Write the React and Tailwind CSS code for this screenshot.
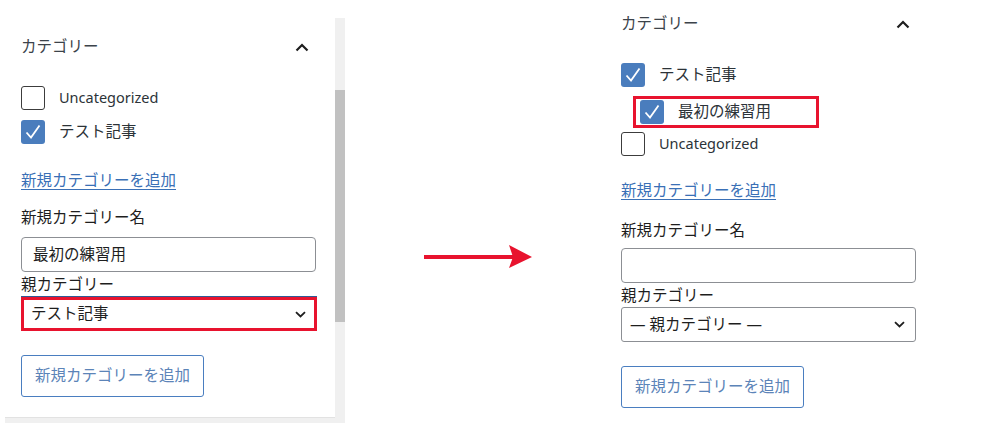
import React from 'react';

const font = "font-['Noto_Sans','Noto_Sans_CJK_JP',sans-serif]";

function ChevronUp() {
  return (
    <svg width="14" height="9" viewBox="0 0 14 9" fill="none">
      <path d="M1.5 7.5 L7 2 L12.5 7.5" stroke="#1e1e1e" strokeWidth="2.2" />
    </svg>
  );
}

function ChevronDown() {
  return (
    <svg width="11" height="7" viewBox="0 0 11 7" fill="none">
      <path d="M1 1.2 L5.5 5.5 L10 1.2" stroke="#1e1e1e" strokeWidth="1.8" />
    </svg>
  );
}

function Box({ checked }) {
  if (!checked) {
    return <div className="w-[24px] h-[24px] rounded-[3px] border-[1.5px] border-[#3c3c3c] bg-white shrink-0" />;
  }
  return (
    <div className="w-[24px] h-[24px] rounded-[3px] bg-[#4a7dbd] shrink-0 flex items-center justify-center">
      <svg width="20" height="20" viewBox="0 0 20 20" fill="none">
        <path d="M3.5 10.5 L8 15.5 L16.5 3.5" stroke="white" strokeWidth="1.8" />
      </svg>
    </div>
  );
}

function Row({ checked, label, latin }) {
  return (
    <div className="h-[24px] flex items-center">
      <Box checked={checked} />
      <span className={`ml-[14px] text-[#2c3338] ${latin ? 'text-[14.5px]' : 'text-[15.5px]'}`}>{label}</span>
    </div>
  );
}

function Heading() {
  return (
    <div className="h-[24px] flex items-center justify-between">
      <span className="text-[15.5px] text-[#3c434a]">カテゴリー</span>
      <span className="mr-[7px]"><ChevronUp /></span>
    </div>
  );
}

function Link({ cls }) {
  return (
    <div className={`h-[22px] leading-[22px] text-[15.5px] text-[#3a70b6] underline underline-offset-[3px] ${cls}`}>
      新規カテゴリーを追加
    </div>
  );
}

function Label({ text, cls }) {
  return <div className={`h-[22px] leading-[22px] text-[15.5px] text-[#1e1e1e] ${cls}`}>{text}</div>;
}

function AddButton({ cls }) {
  return (
    <div className={`w-[183px] h-[42px] rounded-[3px] border border-[#4a7ec0] flex items-center justify-center text-[15.5px] text-[#5c84b8] ${cls}`}>
      新規カテゴリーを追加
    </div>
  );
}

export default function App() {
  return (
    <div className={`w-[1001px] h-[427px] bg-white flex ${font}`}>
      {/* before */}
      <div className="w-[345px] h-full flex">
        <div className="w-[335px] h-full flex flex-col">
          <div className="flex-1 pl-[21px] pr-[19px] pt-[35px]">
            <Heading />
            <div className="mt-[27px] flex flex-col gap-[10px]">
              <Row label="Uncategorized" latin />
              <Row checked label="テスト記事" />
            </div>
            <Link cls="mt-[25px]" />
            <Label text="新規カテゴリー名" cls="mt-[15px]" />
            <div className="mt-[9px] w-[295px] h-[35px] rounded-[4px] border border-[#8c8f94] flex items-center pl-[11px] text-[15.5px] text-[#1e1e1e]">
              最初の練習用
            </div>
            <Label text="親カテゴリー" cls="mt-[1px]" />
            <div className="mt-[2px] w-[296px] h-[34px] border-[3px] border-[#e8132e] shadow-[0_-1px_0_#2f5b96] flex items-center justify-between pl-[7px] pr-[8px] text-[15.5px] text-[#1e1e1e]">
              <span>テスト記事</span>
              <ChevronDown />
            </div>
            <AddButton cls="mt-[24px]" />
          </div>
          <div className="ml-[5px] h-[6px] bg-[#f0f0f0] border-t border-[#e2e2e2] mb-[4px]" />
        </div>
        <div className="w-[10px] pt-[18px] pb-[4px] flex">
          <div className="w-full bg-[#f0f0f0] pt-[72px]">
            <div className="h-[232px] bg-[#c1c1c1]" />
          </div>
        </div>
      </div>

      {/* arrow */}
      <div className="w-[276px] pl-[79px] pt-[245px]">
        <svg width="108" height="24" viewBox="0 0 108 24">
          <rect x="0" y="10" width="90" height="4" fill="#e8132e" />
          <path d="M85 0 L108 12 L85 23 L89 12 Z" fill="#e8132e" />
        </svg>
      </div>

      {/* after */}
      <div className="w-[300px] pt-[12px]">
        <div className="pr-[4px]">
          <Heading />
        </div>
        <div className="mt-[27px]">
          <Row checked label="テスト記事" />
          <div className="mt-[9px] ml-[12px] w-[186px] h-[32px] border-[3px] border-[#e8132e] flex items-center pl-[4px]">
            <Box checked />
            <span className="ml-[14px] text-[15.5px] text-[#2c3338]">最初の練習用</span>
          </div>
          <div className="mt-[4px]">
            <Row label="Uncategorized" latin />
          </div>
        </div>
        <Link cls="mt-[23px]" />
        <Label text="新規カテゴリー名" cls="mt-[18px]" />
        <div className="mt-[7px] w-[295px] h-[35px] rounded-[4px] border border-[#8c8f94]" />
        <Label text="親カテゴリー" cls="mt-[1px]" />
        <div className="mt-[1px] w-[295px] h-[35px] rounded-[3px] border border-[#8c8f94] flex items-center justify-between pl-[8px] pr-[10px] text-[15.5px] text-[#1e1e1e]">
          <span>— 親カテゴリー —</span>
          <ChevronDown />
        </div>
        <AddButton cls="mt-[24px]" />
      </div>
    </div>
  );
}
